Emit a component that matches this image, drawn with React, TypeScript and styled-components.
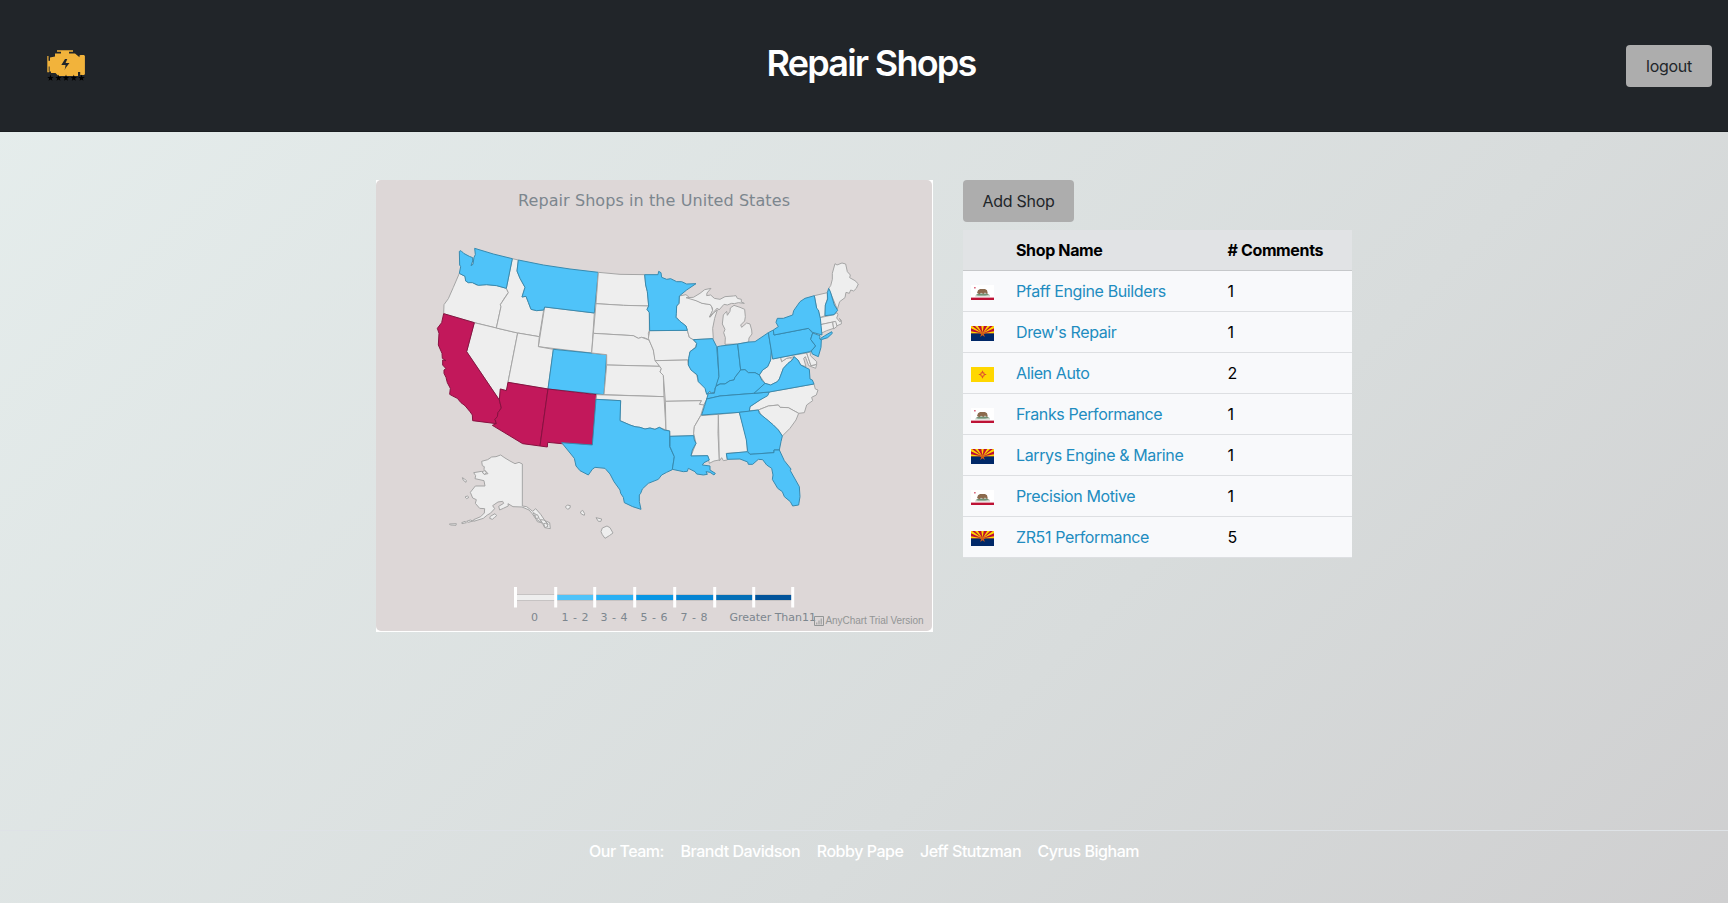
import React from "react";
import styled, { createGlobalStyle } from "styled-components";

const GlobalStyle = createGlobalStyle`
  * { box-sizing: border-box; }
  body {
    margin: 0;
    font-family: Inter, "Liberation Sans", sans-serif;
    font-size: 16px;
    line-height: 24px;
    color: #000;
  }
`;

const Page = styled.div`
  display: flex;
  flex-direction: column;
  height: 903px;
  overflow: hidden;
  background: linear-gradient(135deg, #e6eeed 0%, #d8dcdc 65%, #cfcfd0 100%);
`;

const Header = styled.header`
  display: grid;
  grid-template-columns: 1fr auto 1fr;
  align-items: center;
  height: 132px;
  padding: 0 16px 0 46px;
  background: #212529;
  border-bottom: 1px solid #1a1e21;
`;

const Logo = styled.svg`
  display: block;
  width: 40px;
  height: 34px;
`;

const Title = styled.h1`
  margin: 0 16px 5px 0;
  color: #fff;
  font-size: 36px;
  font-weight: 600;
  line-height: 44px;
  letter-spacing: -1.75px;
  white-space: nowrap;
`;

const Button = styled.button<{ $width: number }>`
  width: ${(p) => p.$width}px;
  height: 42px;
  padding: 0;
  border: 0;
  border-radius: 4px;
  background: #adadad;
  color: #212529;
  font: inherit;
  letter-spacing: -0.28px;
  white-space: nowrap;
`;

const LogoutSlot = styled.div`
  display: flex;
  justify-content: flex-end;
`;

const Main = styled.main`
  display: flex;
  flex: 1;
  align-items: flex-start;
  gap: 30px;
  padding: 48px 0 0 376px;
`;

const MapCard = styled.section`
  width: 557px;
  height: 452px;
  background: #fff;
`;

const Chart = styled.svg`
  display: block;
  width: 556px;
  height: 451px;
  border-radius: 5px;
  background: #ddd7d7;
`;

const ChartText = styled.text<{ $size: number }>`
  font-family: "DejaVu Sans", sans-serif;
  font-size: ${(p) => p.$size}px;
  fill: #7c868e;
`;

const CreditText = styled.text`
  font-family: "Liberation Sans", sans-serif;
  font-size: 10px;
  fill: #929595;
`;

const Side = styled.section`
  display: flex;
  flex-direction: column;
  align-items: flex-start;
  gap: 8px;
  width: 389px;
`;

const Table = styled.div`
  width: 100%;
`;

const Row = styled.div<{ $head?: boolean }>`
  display: grid;
  grid-template-columns: 45px 211.5px 1fr;
  align-items: center;
  height: 41px;
  padding: 0 8px;
  background: ${(p) => (p.$head ? "#e1e3e5" : "#f8f9fb")};
  border-bottom: 1px solid ${(p) => (p.$head ? "#c6c8ca" : "#dddfe2")};
  font-weight: ${(p) => (p.$head ? 700 : 400)};
  letter-spacing: ${(p) => (p.$head ? "-0.36px" : "-0.25px")};
`;

const ShopLink = styled.a`
  color: #218cc0;
  letter-spacing: -0.38px;
  text-decoration: none;
`;

const FlagSvg = styled.svg`
  display: block;
  width: 23px;
  height: 15px;
  margin-top: 3px;
`;

const Footer = styled.footer`
  display: flex;
  justify-content: center;
  gap: 16.5px;
  height: 73px;
  padding-top: 8px;
  border-top: 1px solid #dee2e6;
  color: #fff;
  font-weight: 500;
  letter-spacing: -0.46px;
`;

type Tone = "none" | "few" | "many";
const FILL: Record<Tone, string> = { none: "#eee", few: "#4fc3f9", many: "#c2185b" };
const EDGE: Record<Tone, string> = { none: "#a5a5a5", few: "#378aaf", many: "#881140" };

interface Shape { id: string; tone: Tone; points: string }
interface Region { x: number; y: number; shapes: Shape[] }

// Each region keeps its outlines in a 3x local grid placed at (x, y).
const REGIONS: Region[] = [
  {
    x: -6, y: -10,
    shapes: [
      { id: "OR", tone: "none", points: "268,310 285,319 287,333 295,338 307,337 320,345 350,344 380,347 409,355 415,368 404,383 395,398 391,404 393,410 379,474 313,458 221,431 222,404 235,386 250,352" },
      { id: "NV", tone: "none", points: "313,458 379,474 443,489 414,637 411,662 391,657 388,690 290,545" },
      { id: "ID", tone: "none", points: "427,266 445,270 441,303 450,325 465,352 456,381 468,379 475,397 483,418 500,422 521,420 508,500 443,489 379,474 393,410 391,404 415,368 409,355" },
      { id: "WY", tone: "none", points: "524,411 673,429 665,549 505,530" },
      { id: "UT", tone: "none", points: "443,489 508,500 505,530 550,538 534,657 414,637" },
      { id: "WA", tone: "few", points: "268,244 273,242 281,250 298,259 308,263 308,273 303,287 309,283 312,262 316,254 314,235 370,252 427,266 409,355 380,347 350,344 325,346 307,338 295,338 287,333 285,319 268,310 272,290 269,285" },
      { id: "MT", tone: "few", points: "445,270 520,285 600,297 685,307 673,429 524,411 521,420 500,422 483,418 475,397 468,379 456,381 465,352 450,325 441,303" },
      { id: "CO", tone: "few", points: "550,538 710,554 702,674 534,657" },
      { id: "CA", tone: "many", points: "221,431 313,458 290,545 388,690 394,714 384,728 382,740 375,748 379,761 308,752 307,735 300,725 285,707 273,698 262,685 248,678 239,673 241,655 232,638 228,622 222,610 222,600 228,596 218,585 218,570 228,572 217,565 216,550 205,525 207,490 202,475 215,458" },
      { id: "AZ", tone: "many", points: "414,637 534,657 510,828 458,821 367,766 379,761 375,748 382,740 384,728 394,714 388,690 391,657 409,662" },
      { id: "NM", tone: "many", points: "534,657 680,674 667,825 575,821 533,817 532,831 510,828" },
    ],
  },
  {
    x: 204, y: 70,
    shapes: [
      { id: "ND", tone: "none", points: "55,67 120,73 194,74 197,105 202,125 206,168 130,166 48,161" },
      { id: "SD", tone: "none", points: "48,161 130,166 206,168 201,178 208,188 208,242 205,250 207,270 195,264 185,262 175,265 160,257 40,250" },
      { id: "NE", tone: "none", points: "40,250 160,257 175,265 185,262 207,270 214,285 220,300 225,325 238,349 80,345 80,314 35,309" },
      { id: "KS", tone: "none", points: "80,345 238,349 244,356 240,366 250,376 252,440 72,434" },
      { id: "OK", tone: "none", points: "50,434 252,440 258,540 238,532 225,538 210,534 195,537 180,532 165,530 150,525 120,512 122,452 48,448" },
      { id: "IA", tone: "none", points: "209,242 322,241 328,262 340,269 350,280 346,292 330,305 326,330 225,332 220,300 205,265" },
      { id: "MO", tone: "none", points: "225,332 323,330 325,345 337,362 350,375 355,395 375,410 378,425 385,438 378,452 370,467 358,463 364,452 256,454 250,376 240,366 244,356 236,345" },
      { id: "AR", tone: "none", points: "256,454 364,452 358,463 372,465 362,497 343,530 341,557 270,559 269,543 258,540" },
      { id: "MS", tone: "none", points: "362,497 415,493 414,550 418,630 402,633 388,640 383,617 333,618 348,580 341,550 343,530" },
      { id: "WI", tone: "none", points: "298,138 318,134 330,144 350,152 367,160 390,163 395,170 398,182 390,202 400,190 408,183 412,180 404,205 398,235 400,266 340,269 328,262 322,241 318,228 300,214 288,200 290,168 297,160" },
      { id: "TX", tone: "few", points: "48,448 122,452 120,512 150,525 165,530 180,532 195,537 210,534 225,538 238,532 252,540 269,543 269,590 283,620 277,659 260,667 245,675 235,688 205,700 187,717 182,730 178,735 178,755 183,778 158,770 133,758 130,742 122,730 120,720 102,695 90,672 75,655 45,652 37,658 25,675 0,662 -12,648 -17,625 -55,578 37,585" },
      { id: "MN", tone: "few", points: "194,74 234,74 236,64 243,68 245,82 260,88 272,86 290,95 305,95 320,102 348,101 320,120 298,138 297,160 290,168 289,190 288,202 300,214 318,228 322,241 209,242 208,188 201,178 206,168 202,125 197,105" },
      { id: "LA", tone: "few", points: "270,559 341,557 343,570 348,580 337,600 333,618 383,617 388,630 372,638 367,645 390,648 390,660 406,670 402,675 390,667 378,665 382,673 370,675 350,672 345,665 325,655 322,664 310,665 277,658 283,620 270,590" },
      { id: "IL", tone: "few", points: "340,269 398,266 410,290 417,380 412,402 405,415 405,425 394,430 390,424 380,433 375,415 355,395 352,375 333,360 325,345 326,325 330,305 348,292 350,280" },
    ],
  },
  {
    x: 324, y: 70,
    shapes: [
      { id: "MI-upper", tone: "none", points: "-42,143 -20,142 0,130 14,119 33,115 21,129 20,137 32,135 43,145 60,148 75,140 100,138 108,137 112,145 124,148 124,156 133,160 115,158 103,161 95,160 82,165 72,163 57,180 52,174 40,187 28,201 38,181 37,173 31,164 6,160 -12,152" },
      { id: "MI-lower", tone: "none", points: "75,283 76,263 71,248 75,238 67,222 70,195 80,184 82,196 90,184 91,174 102,166 120,172 134,178 136,200 134,213 122,225 125,232 140,219 150,222 155,240 156,252 147,264 146,276 113,282" },
      { id: "AL", tone: "none", points: "55,493 118,487 140,565 142,606 79,610 82,630 70,632 65,623 58,633" },
      { id: "NC", tone: "none", points: "208,426 342,402 346,417 354,420 349,435 335,442 338,452 320,465 313,488 296,490 265,473 240,472 235,465 205,468 175,480 148,482 150,470 180,450" },
      { id: "SC", tone: "none", points: "175,480 205,468 235,465 240,472 265,473 296,490 288,510 270,535 247,558 235,540 220,525 205,512 185,497" },
      { id: "WV", tone: "none", points: "214,295 218,327 242,322 245,335 260,325 270,323 277,330 264,340 250,355 238,387 232,395 212,405 195,400 178,375 188,360 203,350 212,330" },
      { id: "MD", tone: "none", points: "242,322 320,309 333,348 350,343 347,355 326,347 316,320 311,325 318,350 302,345 294,330 282,320 270,323 260,325 245,335" },
      { id: "DE", tone: "none", points: "320,309 331,306 331,317 350,335 350,343 333,347" },
      { id: "VT", tone: "none", points: "343,137 382,128 382,147 376,165 375,197 360,203 355,180 350,175" },
      { id: "ME", tone: "none", points: "386,115 392,107 397,88 397,70 405,41 411,45 426,39 437,42 442,65 451,75 449,83 465,92 475,102 469,115 461,123 452,120 448,130 438,127 435,143 419,155 412,178" },
      { id: "MA", tone: "none", points: "360,203 402,194 411,188 414,194 410,204 419,215 423,213 418,205 424,211 424,222 411,227 405,215 361,224" },
      { id: "CT", tone: "none", points: "361,224 398,216 401,235 380,242 363,250" },
      { id: "RI", tone: "none", points: "398,216 407,214 411,229 401,237" },
      { id: "IN", tone: "few", points: "52,290 62,288 113,282 122,360 105,382 102,390 90,392 75,402 60,402 48,407 57,380" },
      { id: "OH", tone: "few", points: "113,282 147,276 165,275 205,248 214,300 212,330 203,350 188,360 178,375 165,368 145,368 135,359 122,360" },
      { id: "KY", tone: "few", points: "20,447 25,430 43,430 47,410 60,402 75,402 90,392 102,390 105,382 122,360 135,359 145,368 165,368 178,375 185,390 195,400 180,415 162,430 60,438" },
      { id: "TN", tone: "few", points: "20,447 60,438 162,430 208,426 203,437 180,450 150,470 148,484 118,487 5,495 13,470" },
      { id: "GA", tone: "few", points: "118,487 175,480 178,490 205,512 220,525 235,540 247,558 243,575 238,600 222,600 222,608 150,613 143,604 139,570" },
      { id: "FL", tone: "few", points: "79,611 142,605 150,613 222,608 222,600 238,600 253,632 273,657 271,662 298,710 300,740 296,765 278,768 271,755 253,740 247,725 233,715 217,688 219,675 215,655 200,645 188,629 175,628 158,643 145,643 143,636 120,627 82,628" },
      { id: "VA", tone: "few", points: "162,430 195,400 212,405 232,395 238,387 250,355 264,340 277,330 282,320 294,330 302,345 328,358 330,387 337,390 342,402 208,426" },
      { id: "PA", tone: "few", points: "205,248 220,240 222,255 325,235 338,249 332,268 347,288 338,298 330,305 218,327" },
      { id: "NJ", tone: "few", points: "338,249 360,257 359,267 364,270 363,292 355,320 337,312 334,303 347,288 332,268" },
      { id: "NY", tone: "few", points: "220,240 235,230 228,217 232,205 250,205 278,195 281,182 300,155 315,145 343,137 350,175 355,180 361,205 366,255 338,247 325,235 222,255" },
      { id: "NY-island", tone: "few", points: "362,265 373,258 395,245 397,250 383,263 364,269" },
      { id: "NH", tone: "few", points: "382,128 386,115 391,125 403,165 413,181 402,194 375,197 376,165 383,147" },
    ],
  },
  {
    x: 64, y: 260,
    shapes: [
      { id: "AK", tone: "none", points: "247,198 247,72 237,67 225,71 210,63 195,54 182,45 168,50 155,51 143,59 125,64 127,77 133,80 132,88 144,101 132,103 125,94 101,98 107,107 105,116 132,122 135,138 106,138 91,157 98,174 109,179 106,190 119,205 134,206 133,219 122,230 101,239 101,244 130,235 142,225 151,220 164,206 158,197 174,186 188,184 191,190 176,199 179,210 190,205 205,198 204,191 219,200 246,201 267,210 276,220 289,239 292,245 307,249 314,263 331,266 329,248 315,242 302,223 287,206 278,214 260,200" },
      { id: "AK-panhandle-1", tone: "none", points: "279,218 286,221 298,236 306,249 291,239" },
      { id: "AK-panhandle-2", tone: "none", points: "301,239 312,240 325,253 316,257 307,249" },
      { id: "AK-panhandle-3", tone: "none", points: "284,226 292,224 297,233 289,236" },
      { id: "AK-panhandle-4", tone: "none", points: "311,251 319,249 324,259 315,263" },
      { id: "AK-bay", tone: "none", points: "126,95 134,92 140,99 133,103" },
      { id: "AK-kodiak", tone: "none", points: "151,229 165,221 170,227 164,232 157,238 149,235" },
      { id: "AK-north-isle", tone: "none", points: "67,113 74,117 79,122 78,127 70,121" },
      { id: "AK-west-isle", tone: "none", points: "75,171 82,168 87,172 80,176" },
      { id: "AK-aleutian-1", tone: "none", points: "28,252 49,251 48,256 31,255" },
      { id: "AK-aleutian-2", tone: "none", points: "65,248 75,244 79,248 66,251" },
      { id: "AK-aleutian-3", tone: "none", points: "80,244 91,240 99,243 85,247" },
      { id: "HI-kauai", tone: "none", points: "376,201 382,195 391,197 390,204 383,208" },
      { id: "HI-oahu", tone: "none", points: "421,216 428,211 434,221 433,226 424,222" },
      { id: "HI-maui", tone: "none", points: "468,233 485,237 483,244 475,244" },
      { id: "HI-big", tone: "none", points: "487,264 501,258 510,263 519,279 508,287 495,295 487,284 483,275" },
    ],
  },
];

const LEGEND = [
  { x: 140, end: 180, color: "#eee", label: "0", at: 158.5, width: 7 },
  { x: 180, end: 219, color: "#4fc3f9", label: "1 - 2", at: 199, width: 27 },
  { x: 219, end: 259, color: "#29b0f4", label: "3 - 4", at: 238, width: 27 },
  { x: 259, end: 299, color: "#0796e4", label: "5 - 6", at: 278, width: 27 },
  { x: 299, end: 339, color: "#0484d3", label: "7 - 8", at: 318, width: 27 },
  { x: 339, end: 378, color: "#036fb7", label: "", at: 0, width: 0 },
  { x: 378, end: 417, color: "#01539a", label: "Greater Than11", at: 396.7, width: 86.5 },
];
const TICKS = [139.5, 179.7, 218.7, 258.7, 298.7, 338.7, 377.7, 416.7];

function UsMap() {
  return (
    <Chart viewBox="0 0 556 451">
      <ChartText $size={16} x={142} y={25.5} textLength={272}>Repair Shops in the United States</ChartText>
      {REGIONS.map((r) => (
        <g key={`${r.x}`} transform={`translate(${r.x} ${r.y}) scale(0.33333)`} strokeWidth={3} strokeLinejoin="round">
          {r.shapes.map((s) => (
            <polygon key={s.id} points={s.points} fill={FILL[s.tone]} stroke={EDGE[s.tone]} />
          ))}
        </g>
      ))}
      <rect x={140} y={414} width={278} height={7} fill="#c6c3c3" />
      {LEGEND.map((l) => (
        <g key={l.x}>
          <rect x={l.x} y={415} width={l.end - l.x} height={5} fill={l.color} />
          {l.label && (
            <ChartText $size={11} x={l.at - l.width / 2} y={441} textLength={l.width}>{l.label}</ChartText>
          )}
        </g>
      ))}
      {TICKS.map((x) => (
        <rect key={x} x={x - 1.5} y={407} width={3} height={20.5} fill="#fff" />
      ))}
      <g fill="none" stroke="#929595" strokeWidth={1}>
        <path d="M438.5 436.5h9v9h-9z" />
        <path d="M440.8 444.5v-2M443 444.5v-4M445.2 444.5v-6" />
      </g>
      <CreditText x={449.5} y={444.3} textLength={98}>AnyChart Trial Version</CreditText>
    </Chart>
  );
}

function EngineLogo() {
  const star = "M0-3.4 .8-1.1H3.2L1.3 .4 2 2.8 0 1.4-2 2.8-1.3 .4-3.2-1.1H-.8z";
  return (
    <Logo viewBox="46 49 40 34">
      <path fill="#f2b33b" d="M57 50.2h16v1.6h-4v1.7h6l3 2.5 1.5 1.3V55.5l1-.5h3.2l1.2.8v18.5l-1 .7h-3.7V72h-1.5v4H58.5l-3-3H51v-1.5h-2v.7h-1.7V56h1.4v4.5h1.3V57.5l5-1V53.5h6v-1.7h-4z" />
      <path fill="#212529" d="M65 59h2.3l-1.7 4H69.5L65.6 68l-1 2.2 1-5.2H61.3z" />
      <path fill="#212529" d="M78 72h1.8v4H78zM48.7 56h.9v5h-.9zM48.7 66.5h.9v5h-.9z" />
      {[50.5, 58.5, 66, 73.8, 81.5].map((x) => (
        <path key={x} d={star} fill="#000" transform={`translate(${x} 78)`} />
      ))}
    </Logo>
  );
}

type State = "CA" | "AZ" | "NM";

function Flag({ state }: { state: State }) {
  if (state === "CA") {
    return (
      <FlagSvg viewBox="0 0 23 15">
        <rect width="23" height="15" fill="#fff" />
        <path d="M3 2h1.7v1.6H3z" fill="#dc6b80" />
        <path d="M4.5 10.4 6 9.2h12l1 1.2v1.2H4z" fill="#c5cec3" />
        <path d="M5 9.7 8 8.4h8l2 1.3-4 .7H7z" fill="#6e9276" />
        <path d="M6 8 7 5.3 9 4h5l2 1.3.8 3.3-1.5.2L14 7.6l-1.5 1.5L10 7.8l-1.5 1.5z" fill="#8b6a4d" />
        <rect y="12.6" width="23" height="2.4" fill="#bd1235" />
      </FlagSvg>
    );
  }
  if (state === "AZ") {
    return (
      <FlagSvg viewBox="0 0 23 15">
        <rect width="23" height="15" fill="#bd0d32" />
        <path d="M11.5 7.5-2 7.5V5zM11.5 7.5 0 2.2V0h1zM11.5 7.5 4 0h2.8zM11.5 7.5 10.3 0h2.4zM11.5 7.5 16.2 0H19zM11.5 7.5 22 0h1v2.2zM11.5 7.5 25 5v2.5z" fill="#fed700" />
        <rect y="7.5" width="23" height="7.5" fill="#002868" />
        <path d="m11.5 4.2.9 2.5h2.7l-2.2 1.6.9 2.6-2.3-1.6-2.3 1.6.9-2.6-2.2-1.6h2.7z" fill="#ce5c17" />
      </FlagSvg>
    );
  }
  return (
    <FlagSvg viewBox="0 0 23 15">
      <rect width="23" height="15" fill="#ffd700" />
      <g fill="none" stroke="#e0552b" strokeWidth="1.2">
        <circle cx="11.5" cy="7.5" r="1.8" />
        <path d="M11.5 3.8v2M11.5 9.2v2M7.8 7.5h2M13.2 7.5h2" />
      </g>
    </FlagSvg>
  );
}

const SHOPS: { name: string; state: State; comments: number }[] = [
  { name: "Pfaff Engine Builders", state: "CA", comments: 1 },
  { name: "Drew's Repair", state: "AZ", comments: 1 },
  { name: "Alien Auto", state: "NM", comments: 2 },
  { name: "Franks Performance", state: "CA", comments: 1 },
  { name: "Larrys Engine & Marine", state: "AZ", comments: 1 },
  { name: "Precision Motive", state: "CA", comments: 1 },
  { name: "ZR51 Performance", state: "AZ", comments: 5 },
];

const TEAM = ["Our Team:", "Brandt Davidson", "Robby Pape", "Jeff Stutzman", "Cyrus Bigham"];

export default function App() {
  return (
    <Page>
      <GlobalStyle />
      <Header>
        <EngineLogo />
        <Title>Repair Shops</Title>
        <LogoutSlot>
          <Button $width={86}>logout</Button>
        </LogoutSlot>
      </Header>
      <Main>
        <MapCard>
          <UsMap />
        </MapCard>
        <Side>
          <Button $width={111}>Add Shop</Button>
          <Table>
            <Row $head>
              <span />
              <span>Shop Name</span>
              <span># Comments</span>
            </Row>
            {SHOPS.map((s) => (
              <Row key={s.name}>
                <Flag state={s.state} />
                <ShopLink>{s.name}</ShopLink>
                <span>{s.comments}</span>
              </Row>
            ))}
          </Table>
        </Side>
      </Main>
      <Footer>
        {TEAM.map((t) => (
          <span key={t}>{t}</span>
        ))}
      </Footer>
    </Page>
  );
}
